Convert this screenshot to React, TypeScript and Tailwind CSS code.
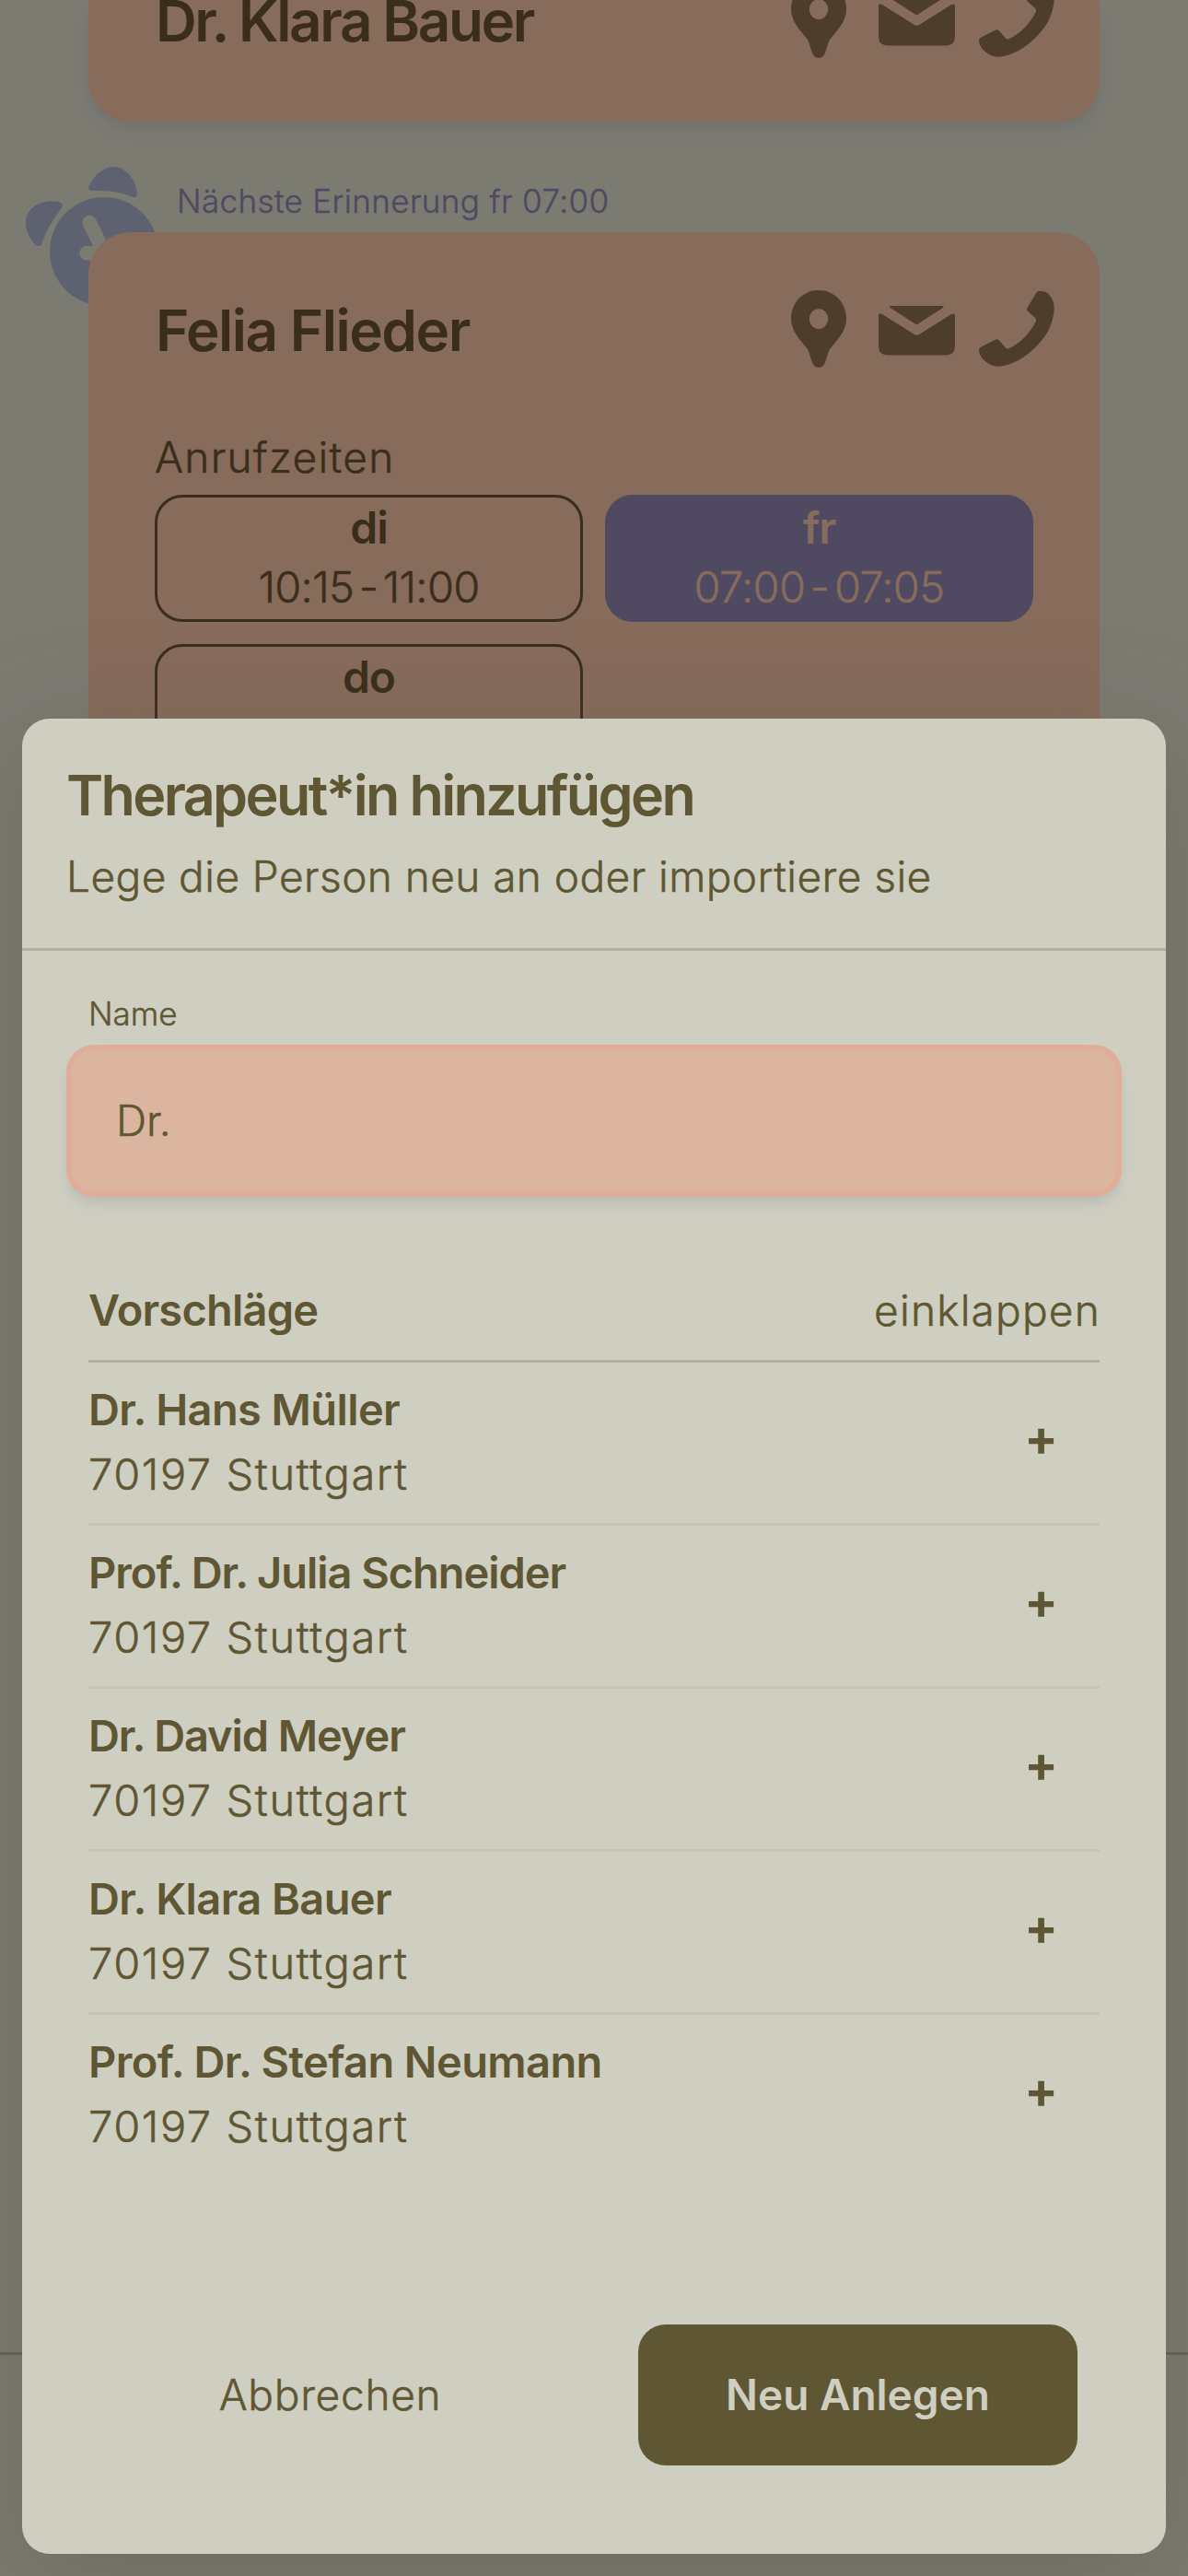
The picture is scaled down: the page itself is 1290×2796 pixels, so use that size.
const Pin = () => (
  <svg viewBox="0 0 60 84" className="mr-[35px] h-[84px] w-[60px] fill-current">
    <path fillRule="evenodd" d="M30 0C13 0 0 13.500 0 31c0 14 11 24 17.500 32.500C22 69.500 21 84 30 84s8-14.500 12.500-20.500C49 55 60 45 60 31 60 13.500 47 0 30 0ZM30 20.200a10.300 10.900 0 1 1 0 21.800 10.300 10.900 0 0 1 0-21.800Z" />
  </svg>
);

const Mail = () => (
  <svg viewBox="0 0 83 54" className="mt-[3px] mr-[26px] h-[54px] w-[83px] fill-current">
    <path d="M13.500 0H69c1.500 0 2 1 1 2L42.500 19.700q-1.200 1-2.400 0L12.500 2c-1-1-.5-2 1-2Z" />
    <path d="M0 10.500C0 8.500 1.500 7.800 3.800 9L39 31q2.500 1.400 5 0L79.200 9C81.500 7.800 83 8.500 83 10.500V43q0 10.500-10.500 10.500h-62Q0 53.500 0 43Z" />
  </svg>
);

const Phone = () => (
  <svg viewBox="0 0 82 82" className="h-[82px] w-[82px] fill-current">
    <path d="M62.500 1.500C63.300 0 65 0 67 0 74 0 76 3 79 8c2.500 5 3 8 2.500 14C80 33 76 44 70 51 58 67 40 80 22 81.800 12 82 1.500 74 .3 66L0 63.500q0-1.500 1.500-2.500L17.500 52.700c2-1 3.500-.7 5 1.300l6.500 7.500c1 1.300 2.500 1.300 4 .5C46 56 56 44.500 62 32.500c.5-1.500 0-2.500-1.500-4L53.500 22.500c-1.500-1.300-1.800-2.500-1-4.500Z" />
  </svg>
);

const ContactIcons = () => (
  <div className="flex items-center text-[#4f3d2b]">
    <Pin />
    <Mail />
    <Phone />
  </div>
);

const Clock = () => (
  <svg viewBox="0 0 160 170" className="absolute top-[170px] left-[20px] h-[170px] w-[160px]">
    <g fill="#5e6270">
      <circle cx="93" cy="103" r="59" />
      <path d="M77 31C83 20 92 11 103 11c14 0 25 15 26 29 0 4-3 5-6 3.500C112 38 97 37 81 37c-4 0-6-2.500-4-6Z" />
      <path d="M8 74C7 57 22 46 43 49c5 .5 6 4 3 8C37 69 30 80 26 93c-1 4-4 5.500-7.500 2.500C13 90 8.500 82 8 74Z" />
    </g>
    <path d="M77.200 71.500 93.500 104.700H74" fill="none" stroke="#7b7b72" strokeWidth="15.500" strokeLinecap="round" strokeLinejoin="round" />
  </svg>
);

const Slot = ({ day, time, active }: { day: string; time: string; active?: boolean }) => (
  <div
    className={
      active
        ? "flex h-[138px] flex-col items-center rounded-[30px] border-3 border-[#4f4962] bg-[#4f4962] text-[#876b5b]"
        : "flex h-[138px] flex-col items-center rounded-[30px] border-3 border-[#3a2e1b] text-[#3a2e1b]"
    }
  >
    <span className="pt-px text-[48px] leading-[64px] font-semibold tracking-[-1px]">{day}</span>
    <span className="text-[47px] leading-[64px] tracking-[-0.7px] [word-spacing:-7px] [-webkit-text-stroke:0.5px]">{time}</span>
  </div>
);

const people = [
  { name: "Dr. Hans Müller", spacing: "tracking-[-0.6px]" },
  { name: "Prof. Dr. Julia Schneider", spacing: "tracking-[-1.05px]" },
  { name: "Dr. David Meyer", spacing: "tracking-[-1.1px]" },
  { name: "Dr. Klara Bauer", spacing: "tracking-[-0.6px]" },
  { name: "Prof. Dr. Stefan Neumann", spacing: "tracking-[-0.6px]" },
];

export default function App() {
  return (
    <div className="relative h-[2796px] w-[1290px] overflow-hidden bg-[#7b7b72] font-['Inter',sans-serif] font-light text-[#3a2e1b]">
      <div className="mx-[96px] h-[132px] rounded-b-[46px] bg-[#876b5b] shadow-[0_12px_18px_-3px_rgba(80,70,110,0.12),0_6px_12px_-6px_rgba(80,70,110,0.15)]">
        <div className="flex h-[46px] items-end justify-between pr-[49px] pl-[73px]">
          <h2 className="h-[61px] text-[62px] leading-[76px] font-semibold tracking-[-2.400px]">Dr. Klara Bauer</h2>
          <div className="relative top-[17px]"><ContactIcons /></div>
        </div>
      </div>

      <Clock />
      <p className="mt-[62px] h-[58px] pl-[192px] text-[35px] leading-[48px] tracking-[0.370px] text-[#4f4962] [-webkit-text-stroke:0.4px]">Nächste Erinnerung fr 07:00</p>

      <div className="relative mx-[96px] h-[900px] rounded-[46px] bg-[#876b5b] px-[72px] pt-[63px]">
        <div className="-mr-[23px] flex h-[84px] items-center justify-between">
          <h2 className="pt-[4px] pl-px text-[62px] leading-[84px] font-semibold tracking-[-1.500px]">Felia Flieder</h2>
          <ContactIcons />
        </div>
        <p className="mt-[61px] mb-[5px] text-[46px] leading-[72px] tracking-[1.300px] [-webkit-text-stroke:0.5px]">Anrufzeiten</p>
        <div className="grid grid-cols-2 gap-[24px]">
          <Slot day="di" time="10:15 - 11:00" />
          <Slot day="fr" time="07:00 - 07:05" active />
          <Slot day="do" time="09:00 - 10:00" />
        </div>
      </div>

      <div className="absolute top-[2553px] left-0 h-[3px] w-full bg-[#656355]" />

      <section className="absolute top-[780px] left-[24px] flex h-[1992px] w-[1242px] flex-col rounded-[30px] bg-[#cfcfc1] text-[#5f5634] shadow-[0_30px_120px_rgba(95,88,68,0.42)]">
        <header className="h-[252px] border-b-3 border-[#b3af9b] px-[48px] pt-[43px]">
          <h1 className="text-[61px] leading-[80px] font-semibold tracking-[-2.650px]">Therapeut*in hinzufügen</h1>
          <p className="mt-[12px] text-[46px] leading-[72px] tracking-[0.430px] [-webkit-text-stroke:0.5px]">Lege die Person neu an oder importiere sie</p>
        </header>
        <div className="px-[48px] pt-[44px]">
          <label className="block h-[58px] pl-[24px] text-[35px] leading-[48px] [-webkit-text-stroke:0.4px]">Name</label>
          <div className="flex h-[165px] items-center rounded-[30px] border-6 border-[#e0ae98] bg-[#dcb5a0] pl-[48px] text-[46px] shadow-[0_12px_18px_-3px_rgba(90,80,140,0.1),0_6px_12px_-6px_rgba(90,80,140,0.15)] [-webkit-text-stroke:0.5px]">Dr.</div>
        </div>
        <div className="mx-[72px] mt-[79px]">
          <div className="flex h-[101px] justify-between border-b-3 border-[#b3af9b] pt-[8px] text-[46px] leading-[72px]">
            <h3 className="text-[47px] font-semibold tracking-[-0.800px]">Vorschläge</h3>
            <span className="-mr-px tracking-[1.200px] [-webkit-text-stroke:0.5px]">einklappen</span>
          </div>
          {people.map(({ name, spacing }) => (
            <div key={name} className="flex h-[177px] items-center justify-between border-b-3 border-[#c5c5b5] pr-[45px] last:border-transparent">
              <div className="pb-[3px]">
                <p className={`text-[47px] leading-[70px] font-semibold ${spacing}`}>{name}</p>
                <p className="text-[47px] leading-[70px] tracking-[1.600px] [-webkit-text-stroke:0.5px]">70197 Stuttgart</p>
              </div>
              <span className="pb-[10px] text-[54px] leading-[60px] font-bold">+</span>
            </div>
          ))}
        </div>
        <footer className="mt-[159px] flex h-[153px] pr-[96px] text-[46px]">
          <button className="flex-1 tracking-[0.700px] [-webkit-text-stroke:0.5px]">Abbrechen</button>
          <button className="w-[477px] rounded-[30px] bg-[#5f5634] font-semibold text-[#cfcfc1]">Neu Anlegen</button>
        </footer>
      </section>
    </div>
  );
}
